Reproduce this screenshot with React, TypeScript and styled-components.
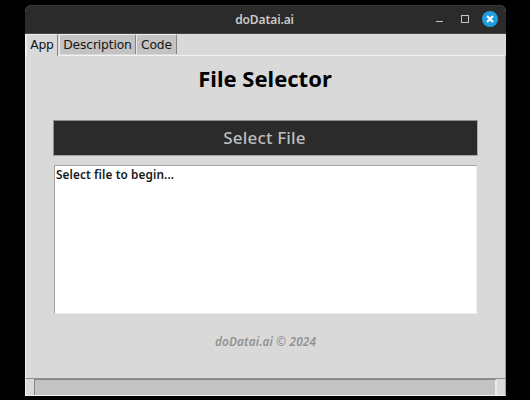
import React from "react";
import styled, { createGlobalStyle } from "styled-components";

const GlobalStyle = createGlobalStyle`
  body { margin: 0; background: #000; overflow: hidden; }
  * { box-sizing: border-box; }
`;

const Desktop = styled.div`
  width: 530px;
  height: 400px;
  padding: 5px 24px 0 25px;
  background: #000;
  font-family: "Noto Sans", sans-serif;
`;

const Window = styled.main`
  display: flex;
  flex-direction: column;
  height: 391px;
  background: #d9d9d9;
  border-radius: 7px 7px 0 0;
  overflow: hidden;
`;

const TitleBar = styled.header`
  display: grid;
  grid-template-columns: 1fr auto 1fr;
  align-items: center;
  height: 29px;
  flex: none;
  padding-right: 2px;
  background: #2b2b2b;
  border-top: 1px solid #353535;
  border-bottom: 1px solid #49454a;
`;

const WindowTitle = styled.span`
  grid-column: 2;
  color: #c9c9c9;
  font-size: 12px;
  font-weight: 600;
  line-height: 16px;
  letter-spacing: -0.1px;
  white-space: nowrap;
`;

const Controls = styled.div`
  display: flex;
  justify-content: flex-end;
  padding-right: 6px;
`;

const TabStrip = styled.nav`
  display: flex;
  align-items: flex-start;
  height: 21px;
  flex: none;
  border-left: 1px solid #f2f2f2;
`;

const Tab = styled.button<{ $width: number; $active?: boolean }>`
  display: flex;
  align-items: flex-start;
  justify-content: center;
  width: ${(p) => p.$width}px;
  height: ${(p) => (p.$active ? 22 : 20)}px;
  margin-right: ${(p) => (p.$active ? 1 : 0)}px;
  padding: 0;
  border: solid;
  border-width: 1px 1px 0 1px;
  border-color: #ededed #858585 #ededed #e9e9e9;
  border-radius: 2px 2px 0 0;
  background: ${(p) => (p.$active ? "#d9d9d9" : "#c3c3c3")};
  position: relative;
  z-index: ${(p) => (p.$active ? 1 : 0)};
  color: #161616;
  font: 12.3px/21px "DejaVu Sans", sans-serif;
  letter-spacing: -0.15px;
  white-space: nowrap;
`;

const Panel = styled.section`
  display: flex;
  flex-direction: column;
  height: 324px;
  flex: none;
  padding: 0 27px;
  border: 1px solid #f2f2f2;
  border-right-color: #999;
  border-bottom-color: #8e8e8e;
`;

const Heading = styled.h1`
  margin: 6px 1px 27px 0;
  height: 31px;
  color: #000;
  font-size: 22px;
  font-weight: 700;
  line-height: 33px;
  text-align: center;
`;

const SelectButton = styled.button`
  height: 36px;
  flex: none;
  padding: 0 2px 0 0;
  border: 1px solid #8c8f8e;
  border-right-color: #aaa;
  border-bottom-color: #a5a5a5;
  background: #2b2b2b;
  color: #bebebe;
  font: 500 17px/32px "Noto Sans", sans-serif;
  letter-spacing: 0.15px;
`;

const Output = styled.div`
  height: 149px;
  flex: none;
  margin: 9px 1px 0 1px;
  padding: 0 1px;
  border: 1px solid #a3a3a3;
  border-right-color: #ededed;
  border-bottom-color: #ededed;
  background: #fff;
  color: #181818;
  font-size: 11.8px;
  font-weight: 600;
  line-height: 17px;
  letter-spacing: 0.1px;
  white-space: nowrap;
`;

const Copyright = styled.footer`
  margin-top: 19px;
  color: #929292;
  font-size: 11.8px;
  font-style: italic;
  font-weight: 600;
  line-height: 17px;
  letter-spacing: 0.15px;
  text-align: center;
`;

const StatusBar = styled.div`
  display: flex;
  flex: 1;
  padding: 0 8px;
  border-bottom: 1px solid #f0f0f0;
  border-left: 1px solid #f2f2f2;
  border-right: 1px solid #a0a0a0;
`;

const Trough = styled.div`
  flex: 1;
  border: 1px solid #858585;
  border-right: 2px solid #eaeaea;
  border-bottom: 0;
  background: #c3c3c3;
`;

export default function App() {
  return (
    <>
      <GlobalStyle />
      <Desktop>
        <Window>
          <TitleBar>
            <WindowTitle>doDatai.ai</WindowTitle>
            <Controls>
              <svg width="64" height="17" viewBox="0 0 64 17" fill="none">
                <path d="M2 10.5h7" stroke="#c4c4c4" />
                <rect x="27.5" y="4.5" width="7" height="7" stroke="#c4c4c4" />
                <circle cx="56" cy="8" r="8" fill="#1f9ede" />
                <path d="m53 5 6 6m0-6-6 6" stroke="#fff" strokeWidth="2.1" />
              </svg>
            </Controls>
          </TitleBar>
          <TabStrip>
            <Tab $width={32} $active>App</Tab>
            <Tab $width={77}>Description</Tab>
            <Tab $width={41}>Code</Tab>
          </TabStrip>
          <Panel>
            <Heading>File Selector</Heading>
            <SelectButton>Select File</SelectButton>
            <Output>Select file to begin...</Output>
            <Copyright>doDatai.ai © 2024</Copyright>
          </Panel>
          <StatusBar>
            <Trough />
          </StatusBar>
        </Window>
      </Desktop>
    </>
  );
}
